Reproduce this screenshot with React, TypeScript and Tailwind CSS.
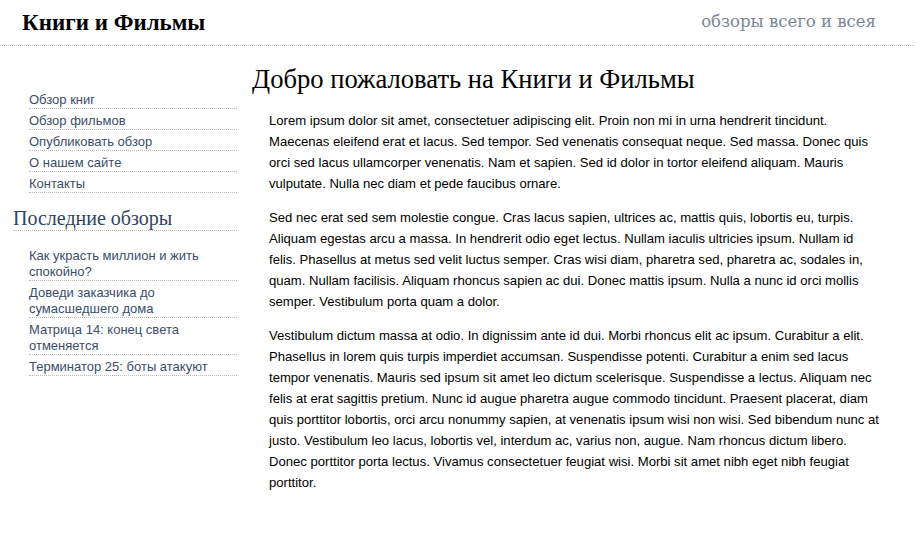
const nav = ["Обзор книг", "Обзор фильмов", "Опубликовать обзор", "О нашем сайте", "Контакты"];

const recent = [
  "Как украсть миллион и жить спокойно?",
  "Доведи заказчика до сумасшедшего дома",
  "Матрица 14: конец света отменяется",
  "Терминатор 25: боты атакуют",
];

const paragraphs = [
  "Lorem ipsum dolor sit amet, consectetuer adipiscing elit. Proin non mi in urna hendrerit tincidunt. Maecenas eleifend erat et lacus. Sed tempor. Sed venenatis consequat neque. Sed massa. Donec quis orci sed lacus ullamcorper venenatis. Nam et sapien. Sed id dolor in tortor eleifend aliquam. Mauris vulputate. Nulla nec diam et pede faucibus ornare.",
  "Sed nec erat sed sem molestie congue. Cras lacus sapien, ultrices ac, mattis quis, lobortis eu, turpis. Aliquam egestas arcu a massa. In hendrerit odio eget lectus. Nullam iaculis ultricies ipsum. Nullam id felis. Phasellus at metus sed velit luctus semper. Cras wisi diam, pharetra sed, pharetra ac, sodales in, quam. Nullam facilisis. Aliquam rhoncus sapien ac dui. Donec mattis ipsum. Nulla a nunc id orci mollis semper. Vestibulum porta quam a dolor.",
  "Vestibulum dictum massa at odio. In dignissim ante id dui. Morbi rhoncus elit ac ipsum. Curabitur a elit. Phasellus in lorem quis turpis imperdiet accumsan. Suspendisse potenti. Curabitur a enim sed lacus tempor venenatis. Mauris sed ipsum sit amet leo dictum scelerisque. Suspendisse a lectus. Aliquam nec felis at erat sagittis pretium. Nunc id augue pharetra augue commodo tincidunt. Praesent placerat, diam quis porttitor lobortis, orci arcu nonummy sapien, at venenatis ipsum wisi non wisi. Sed bibendum nunc at justo. Vestibulum leo lacus, lobortis vel, interdum ac, varius non, augue. Nam rhoncus dictum libero. Donec porttitor porta lectus. Vivamus consectetuer feugiat wisi. Morbi sit amet nibh eget nibh feugiat porttitor.",
];

export default function App() {
  return (
    <div className="min-h-[533px] bg-white font-['Liberation_Sans',Arial,sans-serif]">
      {/* header */}
      <div className="mr-[8px] flex h-[46px] items-center justify-between border-b border-dotted border-[#bbbbbb] pl-[22px] pr-[39px]">
        <span className="font-['Liberation_Serif',serif] text-[23px] font-bold leading-[26px] text-black">Книги и Фильмы</span>
        <span className="font-['DejaVu_Serif',serif] text-[16.5px] text-[#7b8796]">обзоры всего и всея</span>
      </div>

      <div className="flex">
        {/* sidebar */}
        <div className="w-[237px] shrink-0 pt-[42px]">
          <ul className="ml-[29px]">
            {nav.map((item) => (
              <li key={item} className="border-b border-dotted border-[#bbbbbb] pt-[4px] text-[13px] leading-[16px]">
                <a href="#" className="text-[#3a4d6b]">{item}</a>
              </li>
            ))}
          </ul>

          <h2 className="ml-[13px] mt-[14px] border-b border-dotted border-[#bbbbbb] font-['Liberation_Serif',serif] text-[20px] leading-[23px] text-[#2f4560]">
            Последние обзоры
          </h2>

          <ul className="ml-[29px] mt-[13px]">
            {recent.map((item) => (
              <li key={item} className="border-b border-dotted border-[#bbbbbb] pt-[4px] text-[13px] leading-[16px]">
                <a href="#" className="text-[#3a4d6b]">{item}</a>
              </li>
            ))}
          </ul>
        </div>

        {/* content */}
        <div className="ml-[15px] flex-1 pr-[42px]">
          <h1 className="mt-[16px] font-['Liberation_Serif',serif] text-[26.6px] leading-[34px] text-black">
            Добро пожаловать на Книги и Фильмы
          </h1>
          <div className="ml-[17px] mt-[14px]">
            {paragraphs.map((p, i) => (
              <p key={i} className="mb-[13px] text-[13.1px] leading-[21px] text-black">
                {p}
              </p>
            ))}
          </div>
        </div>
      </div>
    </div>
  );
}
